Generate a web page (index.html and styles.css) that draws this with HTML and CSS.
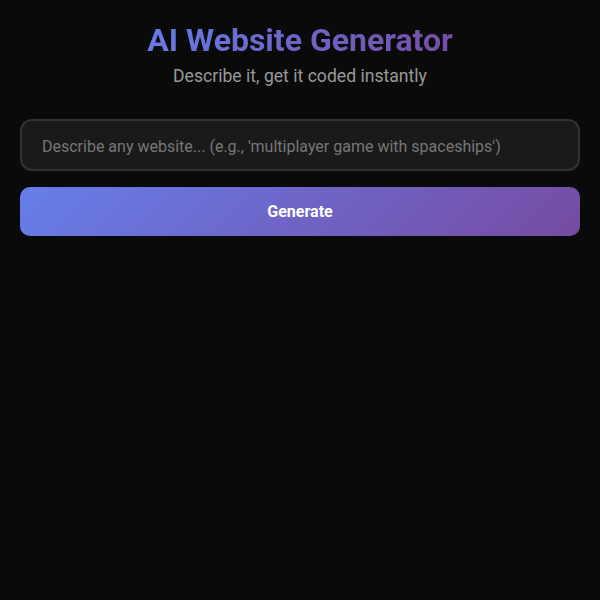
FILE: index.html
```html
<!DOCTYPE html>
<html>
<head>
<meta charset="utf-8">
<link rel="stylesheet" href="styles.css">
</head>
<body>
<div class="container">
  <header class="header">
    <h1 class="title">AI Website Generator</h1>
    <p class="subtitle">Describe it, get it coded instantly</p>
  </header>
  <div class="form">
    <input class="prompt" type="text" placeholder="Describe any website... (e.g., 'multiplayer game with spaceships')">
    <button class="generate">Generate</button>
  </div>
</div>
</body>
</html>
```
FILE: styles.css
```css
* { box-sizing: border-box; }
html, body { margin: 0; padding: 0; background: #0a0a0a; }
body { font-family: Roboto, "Noto Sans", sans-serif; color: #fff; }
.container { padding: 20px; }
.header { text-align: center; margin-bottom: 32px; }
.title {
  margin: 0 0 5px;
  font-size: 32px;
  font-weight: 700;
  line-height: 40px;
  background: linear-gradient(135deg, #667eea 0%, #764ba2 100%);
  -webkit-background-clip: text;
  background-clip: text;
  color: transparent;
  display: inline-block;
}
.subtitle { margin: 0; font-size: 17.6px; color: #999; line-height: 22px; }
.form { display: flex; flex-direction: column; gap: 16px; }
.prompt {
  width: 100%;
  height: 52px;
  padding: 2px 20px 0;
  font-family: inherit;
  font-size: 16px;
  line-height: 18px;
  background: #1a1a1a;
  border: 2px solid #333;
  border-radius: 12px;
  color: #fff;
  outline: none;
}
.prompt::placeholder { color: #777; }
.generate {
  width: 100%;
  height: 49px;
  padding: 0 15px;
  font-family: inherit;
  font-size: 16px;
  font-weight: 700;
  line-height: 19px;
  color: #fff;
  border: none;
  border-radius: 10px;
  background: linear-gradient(135deg, #667eea 0%, #764ba2 100%);
}
```
